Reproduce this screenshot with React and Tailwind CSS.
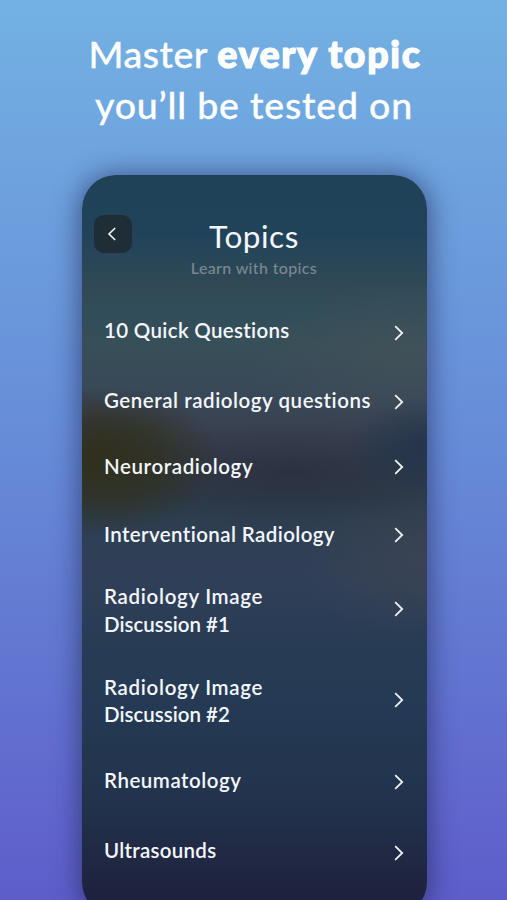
import React from 'react';
import clsx from 'clsx';

const topics = [
  { lines: ['10 Quick Questions'], row: 'h-[70px]', label: 'pb-[5px] tracking-[0.32px]' },
  { lines: ['General radiology questions'], row: 'h-[68px]', label: 'pb-[2px] tracking-[0.55px]' },
  { lines: ['Neuroradiology'], row: 'h-[62px]', label: 'tracking-[0.6px]' },
  { lines: ['Interventional Radiology'], row: 'h-[73px]', label: 'tracking-[0.4px]' },
  { lines: ['Radiology Image', 'Discussion #1'], row: 'h-[76px]', label: 'pt-[3px] first-line:tracking-[0.7px]' },
  { lines: ['Radiology Image', 'Discussion #2'], row: 'h-[106px]', label: 'pt-[2px] first-line:tracking-[0.7px]' },
  { lines: ['Rheumatology'], row: 'h-[58px]', label: 'pb-[3px] tracking-[0.52px]' },
  { lines: ['Ultrasounds'], row: 'h-[83px]', label: 'pb-[3px] tracking-[0.28px]' },
];

function Headline() {
  return (
    <h1 className="h-[175px] pt-[28px] text-center text-[37.5px] leading-[51px] font-medium text-white [-webkit-text-stroke:0.3px_white]">
      <span className="block pl-[3px] tracking-[0.5px]">
        Master <strong className="font-black tracking-[1.65px] [-webkit-text-stroke:1.2px_white]">every topic</strong>
      </span>
      <span className="block pl-[1px] tracking-[0.8px]">you’ll be tested on</span>
    </h1>
  );
}

function BackButton() {
  return (
    <button
      aria-label="Back"
      className="flex size-[38px] items-center justify-center rounded-[10px] bg-[#1f2d36]"
    >
      <svg width="10" height="14" viewBox="0 0 10 14" fill="none" className="mr-[3px]">
        <path d="M8.2 1 2 7 8.2 13" stroke="#f4f7f9" strokeWidth="1.6" />
      </svg>
    </button>
  );
}

function TopicRow({ topic }) {
  return (
    <li className={clsx('flex items-center justify-between', topic.row)}>
      <span className={clsx('text-[20.5px] leading-[27.5px] font-semibold whitespace-nowrap', topic.label)}>
        {topic.lines.map((line) => (
          <span key={line} className="block">{line}</span>
        ))}
      </span>
      <svg width="10" height="16" viewBox="0 0 10 16" fill="none" className="shrink-0">
        <path d="M1.2 1.2 8.2 8 1.2 14.8" stroke="#edf3f7" strokeWidth="1.8" />
      </svg>
    </li>
  );
}

export default function App() {
  return (
    <div className="h-[900px] w-[507px] overflow-hidden bg-linear-to-b from-[#73b1e3] via-[#668bd7] to-[#5e5dca] font-['Lato','Open_Sans',sans-serif]">
      <Headline />

      {/* Phone screen, cut off by the bottom edge */}
      <div className="ml-[82px] h-[741px] w-[345px] rounded-[34px] shadow-[0_2px_26px_3px_rgba(30,35,80,0.58)]">
        <div className="h-full overflow-hidden rounded-[34px] text-[#f3f7fc] bg-[radial-gradient(120px_74px_at_20px_285px,#30301e_10%,#30301ebb_50%,#30301e00),radial-gradient(80px_50px_at_345px_272px,#20334ddd,#20334d00),radial-gradient(200px_50px_at_210px_298px,#2b2f3edd,#2b2f3e00),radial-gradient(160px_75px_at_330px_180px,#465258aa,#46525800),radial-gradient(130px_80px_at_345px_385px,#41465099,#41465000),linear-gradient(180deg,#1f4257_0px,#21435a_60px,#304a55_112px,#304d59_135px,#374f58_170px,#394858_220px,#39404f_260px,#2c3c4b_325px,#2f3f54_365px,#303f58_410px,#283c54_465px,#243953_540px,#22324c_630px,#202742_690px,#1b1f3b_741px)]">
          <header className="flex h-[123px] items-start pt-10 pl-3">
            <BackButton />
            <div className="ml-[37px] w-[170px] text-center">
              <h2 className="text-[31.5px] leading-[42px] font-normal tracking-[0.55px]">Topics</h2>
              <p className="text-[16px] leading-[22px] font-medium tracking-[0.35px] text-[#7c878f]">Learn with topics</p>
            </div>
          </header>

          <ul className="pr-[23px] pl-[22px]">
            {topics.map((topic) => (
              <TopicRow key={topic.lines.join(' ')} topic={topic} />
            ))}
          </ul>
        </div>
      </div>
    </div>
  );
}
